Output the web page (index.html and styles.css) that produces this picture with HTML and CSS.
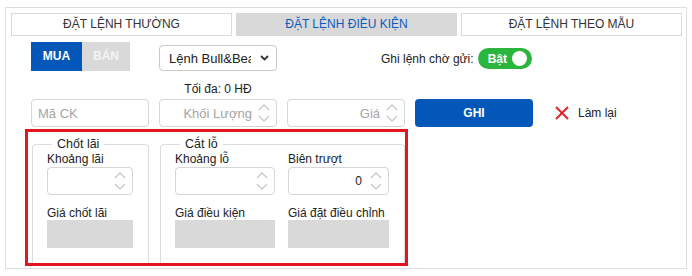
FILE: index.html
```html
<!DOCTYPE html>
<html lang="vi">
<head>
<meta charset="utf-8">
<title>Đặt lệnh điều kiện</title>
<link rel="stylesheet" href="styles.css">
</head>
<body>
<div class="panel">
  <div class="tabs">
    <div class="tab">ĐẶT LỆNH THƯỜNG</div>
    <div class="tab active">ĐẶT LỆNH ĐIỀU KIỆN</div>
    <div class="tab">ĐẶT LỆNH THEO MẪU</div>
  </div>

  <div class="row-side">
    <div class="side">
      <div class="side-btn buy">MUA</div>
      <div class="side-btn sell">BÁN</div>
    </div>
    <div class="select">
      <span class="select-text">Lệnh Bull&amp;Bear</span>
      <svg class="chev" width="9" height="6" viewBox="0 0 9 6"><polyline points="1,1 4.5,4.5 8,1" fill="none" stroke="#333" stroke-width="1.8"/></svg>
    </div>
    <div class="pending-label">Ghi lệnh chờ gửi:</div>
    <div class="toggle"><span class="toggle-text">Bật</span><span class="knob"></span></div>
  </div>

  <div class="max">Tối đa: 0 HĐ</div>

  <div class="order-row">
    <div class="field"><input class="inp" placeholder="Mã CK"></div>
    <div class="field">
      <input class="inp right" placeholder="Khối Lượng">
      <svg class="spin" width="12" height="24" viewBox="0 0 12 24"><polyline points="1,9 6,4 11,9" fill="none" stroke="#c8c8c8" stroke-width="1.3"/><polyline points="1,15 6,20 11,15" fill="none" stroke="#c8c8c8" stroke-width="1.3"/></svg>
    </div>
    <div class="field">
      <input class="inp right" placeholder="Giá">
      <svg class="spin" width="12" height="24" viewBox="0 0 12 24"><polyline points="1,9 6,4 11,9" fill="none" stroke="#c8c8c8" stroke-width="1.3"/><polyline points="1,15 6,20 11,15" fill="none" stroke="#c8c8c8" stroke-width="1.3"/></svg>
    </div>
    <button class="btn-save">GHI</button>
    <div class="reset">
      <svg class="x" width="14" height="14" viewBox="0 0 14 14"><line x1="1" y1="1" x2="13" y2="13" stroke="#e3222a" stroke-width="2"/><line x1="13" y1="1" x2="1" y2="13" stroke="#e3222a" stroke-width="2"/></svg>
      <span>Làm lại</span>
    </div>
  </div>

  <div class="cond">
    <fieldset class="group take">
      <legend>Chốt lãi</legend>
      <label class="lbl">Khoảng lãi</label>
      <div class="field small">
        <input class="inp right">
        <svg class="spin" width="12" height="24" viewBox="0 0 12 24"><polyline points="1,9 6,4 11,9" fill="none" stroke="#c8c8c8" stroke-width="1.3"/><polyline points="1,15 6,20 11,15" fill="none" stroke="#c8c8c8" stroke-width="1.3"/></svg>
      </div>
      <label class="lbl second">Giá chốt lãi</label>
      <div class="readonly"></div>
    </fieldset>

    <fieldset class="group stop">
      <legend>Cắt lỗ</legend>
      <div class="cols">
        <div class="col c1">
          <label class="lbl">Khoảng lỗ</label>
          <div class="field small">
            <input class="inp right">
            <svg class="spin" width="12" height="24" viewBox="0 0 12 24"><polyline points="1,9 6,4 11,9" fill="none" stroke="#c8c8c8" stroke-width="1.3"/><polyline points="1,15 6,20 11,15" fill="none" stroke="#c8c8c8" stroke-width="1.3"/></svg>
          </div>
          <label class="lbl second">Giá điều kiện</label>
          <div class="readonly"></div>
        </div>
        <div class="col c2">
          <label class="lbl">Biên trượt</label>
          <div class="field small">
            <input class="inp right val" value="0">
            <svg class="spin" width="12" height="24" viewBox="0 0 12 24"><polyline points="1,9 6,4 11,9" fill="none" stroke="#c8c8c8" stroke-width="1.3"/><polyline points="1,15 6,20 11,15" fill="none" stroke="#c8c8c8" stroke-width="1.3"/></svg>
          </div>
          <label class="lbl second">Giá đặt điều chỉnh</label>
          <div class="readonly"></div>
        </div>
      </div>
    </fieldset>
  </div>
</div>
</body>
</html>
```

FILE: styles.css
```css
* { box-sizing: border-box; }

html, body {
  margin: 0;
  padding: 0;
  background: #fff;
}

body {
  font-family: "Liberation Sans", Arial, sans-serif;
  font-size: 12px;
  color: #222;
}

.panel {
  margin: 7px 0 0 5px;
  width: 682px;
  height: 262px;
  border: 1px solid #dedede;
}

.tabs {
  display: flex;
  gap: 4px;
  margin: 5px 0 0 5px;
}

.tab {
  width: 221px;
  height: 23px;
  line-height: 21px;
  border: 1px solid #dadada;
  text-align: center;
  font-size: 12px;
  color: #333;
  background: #fff;
}

.tab.active {
  background: #d9d9d9;
  border-color: #d9d9d9;
  color: #0a5cc0;
}

.row-side {
  display: flex;
  align-items: flex-start;
  margin-top: 6px;
  padding-left: 25px;
  height: 29px;
}

.side { display: flex; }

.side-btn {
  height: 29px;
  line-height: 29px;
  text-align: center;
  font-weight: bold;
  font-size: 12px;
}

.side-btn.buy { width: 51px; background: #0257b8; color: #fff; }
.side-btn.sell { width: 48px; background: #d9d9d9; color: #f4f4f4; }

.select {
  display: flex;
  align-items: center;
  margin: 3px 0 0 29px;
  width: 118px;
  height: 26px;
  border: 1px solid #c9c9c9;
  border-radius: 4px;
  padding: 0 7px 0 9px;
}

.select-text {
  flex: 1;
  min-width: 0;
  overflow: hidden;
  white-space: nowrap;
  font-size: 13px;
  color: #222;
  margin-right: 9px;
}

.chev { flex: none; }

.pending-label {
  margin: 10px 0 0 104px;
  line-height: 14px;
  color: #222;
}

.toggle {
  display: flex;
  align-items: center;
  justify-content: space-between;
  margin: 6px 0 0 4px;
  width: 54px;
  height: 21px;
  border-radius: 11px;
  background: #2bb53c;
  padding: 0 5px 0 10px;
}

.toggle-text {
  color: #fff;
  font-weight: bold;
  font-size: 12px;
}

.knob {
  width: 15px;
  height: 15px;
  border-radius: 50%;
  background: #fff;
}

.max {
  margin: 11px 0 0 153px;
  width: 118px;
  text-align: center;
  line-height: 14px;
  color: #222;
}

.order-row {
  display: flex;
  align-items: center;
  gap: 10px;
  margin-top: 3px;
  padding-left: 25px;
  height: 28px;
}

.field {
  display: flex;
  align-items: center;
  width: 118px;
  height: 28px;
  border: 1px solid #d6d6d6;
  border-radius: 4px;
  background: #fff;
}

.inp {
  flex: 1;
  min-width: 0;
  height: 100%;
  border: 0;
  outline: none;
  background: transparent;
  font-family: "Liberation Sans", Arial, sans-serif;
  font-size: 13px;
  color: #222;
  padding: 0 6px;
}

.inp.right { text-align: right; padding-right: 6px; }
.inp.val { font-size: 12px; padding-right: 8px; }

.inp::placeholder { color: #a4a4a4; }

.spin { flex: none; margin-right: 6px; }

.btn-save {
  width: 118px;
  height: 28px;
  border: 0;
  border-radius: 4px;
  background: #0257b8;
  color: #fff;
  font-family: "Liberation Sans", Arial, sans-serif;
  font-weight: bold;
  font-size: 12px;
  padding: 0;
}

.reset {
  display: flex;
  align-items: center;
  margin-left: 12px;
  color: #222;
}

.reset .x { margin-right: 9px; }

.cond {
  display: flex;
  align-items: stretch;
  gap: 11px;
  margin: 2px 0 0 19px;
  width: 383px;
  height: 137px;
  border: 3px solid #e3161f;
  padding: 4px 0 0 4px;
}

.group {
  margin: 0;
  padding: 0 14px;
  border: 1px solid #dcdcdc;
  border-bottom: none;
  border-radius: 4px 4px 0 0;
  min-width: 0;
}

.group.take { width: 117px; }
.group.stop { width: 245px; }

.group legend {
  margin-left: 5px;
  padding: 0 5px;
  font-size: 12.5px;
  line-height: 16px;
  color: #222;
}

.lbl {
  display: block;
  line-height: 14px;
  color: #222;
}

.lbl.second { margin-top: 11px; }

.field.small { margin-top: 1px; width: 86px; }

.readonly {
  height: 28px;
  width: 86px;
  background: #d9d9d9;
}

.cols {
  display: flex;
  gap: 13px;
}

.col.c1 { width: 100px; }
.col.c2 { width: 101px; }

.col .field.small,
.col .readonly { width: 100%; }
```
